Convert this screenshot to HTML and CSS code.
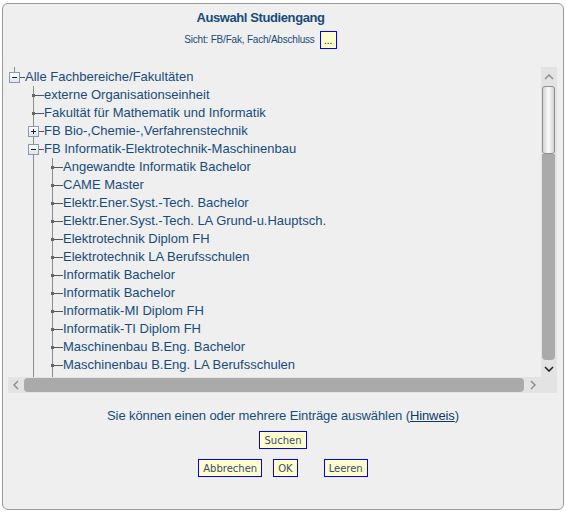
FILE: index.html
```html
<!DOCTYPE html>
<html lang="de">
<head>
  <meta charset="UTF-8">
  <title>Auswahl Studiengang</title>
  <link rel="stylesheet" href="styles.css">
</head>
<body>
  <div class="panel">
    <!-- Kopf -->
    <div class="head">
      <h1>Auswahl Studiengang</h1>
      <div class="view">Sicht: FB/Fak, Fach/Abschluss <button class="btn btn-dots">...</button></div>
    </div>

    <!-- Baum -->
    <div class="tree-box">
      <div class="tree">
        <div class="row root">
          <span class="toggle minus"></span><i class="stub"></i><span class="label">Alle Fachbereiche/Fakultäten</span>
        </div>
        <div class="children lvl1">
          <div class="row"><i class="branch"></i><span class="label">externe Organisationseinheit</span></div>
          <div class="row"><i class="branch"></i><span class="label">Fakultät für Mathematik und Informatik</span></div>
          <div class="row"><span class="toggle plus"></span><i class="stub"></i><span class="label">FB Bio-,Chemie-,Verfahrenstechnik</span></div>
          <div class="row"><span class="toggle minus"></span><i class="stub"></i><span class="label">FB Informatik-Elektrotechnik-Maschinenbau</span></div>
          <div class="children lvl2">
            <div class="row"><i class="branch"></i><span class="label">Angewandte Informatik Bachelor</span></div>
            <div class="row"><i class="branch"></i><span class="label">CAME Master</span></div>
            <div class="row"><i class="branch"></i><span class="label">Elektr.Ener.Syst.-Tech. Bachelor</span></div>
            <div class="row"><i class="branch"></i><span class="label">Elektr.Ener.Syst.-Tech. LA Grund-u.Hauptsch.</span></div>
            <div class="row"><i class="branch"></i><span class="label">Elektrotechnik Diplom FH</span></div>
            <div class="row"><i class="branch"></i><span class="label">Elektrotechnik LA Berufsschulen</span></div>
            <div class="row"><i class="branch"></i><span class="label">Informatik Bachelor</span></div>
            <div class="row"><i class="branch"></i><span class="label">Informatik Bachelor</span></div>
            <div class="row"><i class="branch"></i><span class="label">Informatik-MI Diplom FH</span></div>
            <div class="row"><i class="branch"></i><span class="label">Informatik-TI Diplom FH</span></div>
            <div class="row"><i class="branch"></i><span class="label">Maschinenbau B.Eng. Bachelor</span></div>
            <div class="row"><i class="branch"></i><span class="label">Maschinenbau B.Eng. LA Berufsschulen</span></div>
          </div>
        </div>
      </div>

      <div class="vscroll">
        <div class="arrow up">
          <svg width="10" height="6" viewBox="0 0 10 6"><polyline points="1,5 5,1 9,5" fill="none" stroke="#8a8a8a" stroke-width="1.4"/></svg>
        </div>
        <div class="vthumb"></div>
        <div class="vtrack"></div>
        <div class="arrow down">
          <svg width="10" height="6" viewBox="0 0 10 6"><polyline points="1,1 5,5 9,1" fill="none" stroke="#222" stroke-width="1.6"/></svg>
        </div>
      </div>
      <div class="hscroll">
        <div class="arrow left">
          <svg width="6" height="10" viewBox="0 0 6 10"><polyline points="5,1 1,5 5,9" fill="none" stroke="#8a8a8a" stroke-width="1.4"/></svg>
        </div>
        <div class="htrack"></div>
        <div class="arrow right">
          <svg width="6" height="10" viewBox="0 0 6 10"><polyline points="1,1 5,5 1,9" fill="none" stroke="#8a8a8a" stroke-width="1.4"/></svg>
        </div>
      </div>
      <div class="corner"></div>
    </div>

    <!-- Fuss -->
    <p class="hint">Sie können einen oder mehrere Einträge auswählen (<a href="#">Hinweis</a>)</p>
    <div class="buttons">
      <button class="btn">Suchen</button>
    </div>
    <div class="buttons">
      <button class="btn">Abbrechen</button>
      <button class="btn">OK</button>
      <button class="btn btn-far">Leeren</button>
    </div>
  </div>
</body>
</html>
```

FILE: styles.css
```css
/* Grundlayout */
* {
  margin: 0;
  padding: 0;
  box-sizing: border-box;
}
body {
  background: #fff;
  font-family: "Liberation Sans", Arial, sans-serif;
  color: #174c7a;
}
.panel {
  margin: 3px 2px;
  height: 507px;
  background: #efefef;
  border: 1px solid #9a9a9a;
  border-radius: 6px;
  padding-top: 6px;
}
/* Kopf */
.head {
  margin-right: 45px;
  text-align: center;
}
.head h1 {
  font-size: 13px;
  line-height: 16px;
  font-weight: bold;
  letter-spacing: -0.4px;
  color: #174c7a;
}
.view {
  margin-top: 5px;
  font-size: 10px;
  line-height: 18px;
  letter-spacing: -0.2px;
  display: flex;
  justify-content: center;
  align-items: center;
  gap: 5px;
}
/* Buttons */
.btn {
  background: #ffffcc;
  border: 1px solid #0000ff;
  font-family: "DejaVu Sans", Verdana, sans-serif;
  font-size: 10px;
  letter-spacing: 0;
  color: #3b4a72;
  height: 18px;
  padding: 0 4px;
  cursor: pointer;
}
.btn-dots {
  width: 17px;
  padding: 0;
  color: #222;
  font-family: "Liberation Sans", Arial, sans-serif;
}
/* Baum */
.tree-box {
  margin: 18px 6px 0 5px;
  height: 326px;
  display: grid;
  grid-template-columns: 1fr 16px;
  grid-template-rows: 1fr 16px;
}
.tree {
  overflow: hidden;
  padding: 1px 0 0 1px;
  font-size: 13px;
}
.row {
  height: 18px;
  display: flex;
  align-items: center;
  white-space: nowrap;
}
.label {
  line-height: 18px;
}
.toggle {
  position: relative;
  flex: none;
  width: 11px;
  height: 11px;
  border: 1px solid #8797b5;
  background: linear-gradient(#ffffff, #dfe3ea);
}
.toggle::after {
  content: "";
  position: absolute;
  left: 2px;
  top: 4px;
  width: 5px;
  height: 1px;
  background: #222;
}
.toggle.plus::before {
  content: "";
  position: absolute;
  left: 4px;
  top: 2px;
  width: 1px;
  height: 5px;
  background: #222;
}
.root .toggle::before {
  content: "";
  position: absolute;
  left: 4px;
  top: -6px;
  width: 1px;
  height: 5px;
  background: #8c8c8c;
}
.stub {
  flex: none;
  width: 5px;
  height: 1px;
  background: #555;
}
.branch {
  position: relative;
  flex: none;
  width: 10px;
  height: 1px;
  background: #555;
}
.branch::before {
  content: "";
  position: absolute;
  left: -2px;
  top: -1px;
  width: 3px;
  height: 3px;
  background: #666;
}
.children {
  border-left: 1px solid #8c8c8c;
}
.children .toggle {
  margin-left: -6px;
}
.lvl1 {
  margin-left: 24px;
}
.lvl2 {
  margin-left: 18px;
  padding-bottom: 30px;
}
/* Scrollbalken */
.vscroll {
  background: #e3e3e3;
  display: flex;
  flex-direction: column;
  padding: 0 2px 0 1px;
}
.arrow {
  flex: none;
  display: flex;
  align-items: center;
  justify-content: center;
}
.arrow.up {
  height: 19px;
}
.arrow.down {
  height: 17px;
}
.vthumb {
  flex: none;
  height: 68px;
  border: 1px solid #8e8e8e;
  border-radius: 3px;
  background: linear-gradient(90deg, #d2d2d2, #fafafa 50%, #d2d2d2);
}
.vtrack {
  flex: 1;
  background: #aaa;
  border-radius: 0 0 4px 4px;
}
.hscroll {
  background: #e3e3e3;
  display: flex;
  padding: 1px 0;
}
.arrow.left {
  width: 16px;
}
.arrow.right {
  width: 17px;
}
.htrack {
  flex: 1;
  background: #aaa;
  border-radius: 4px;
}
.corner {
  background: #e3e3e3;
}
/* Fuss */
.hint {
  margin-top: 15px;
  font-size: 13px;
  line-height: 16px;
  letter-spacing: -0.1px;
  text-align: center;
}
.hint a {
  color: #0d3a63;
}
.buttons {
  margin-top: 7px;
  display: flex;
  justify-content: center;
  gap: 11px;
}
.buttons + .buttons {
  margin-top: 10px;
}
.btn-far {
  margin-left: 15px;
}
```
